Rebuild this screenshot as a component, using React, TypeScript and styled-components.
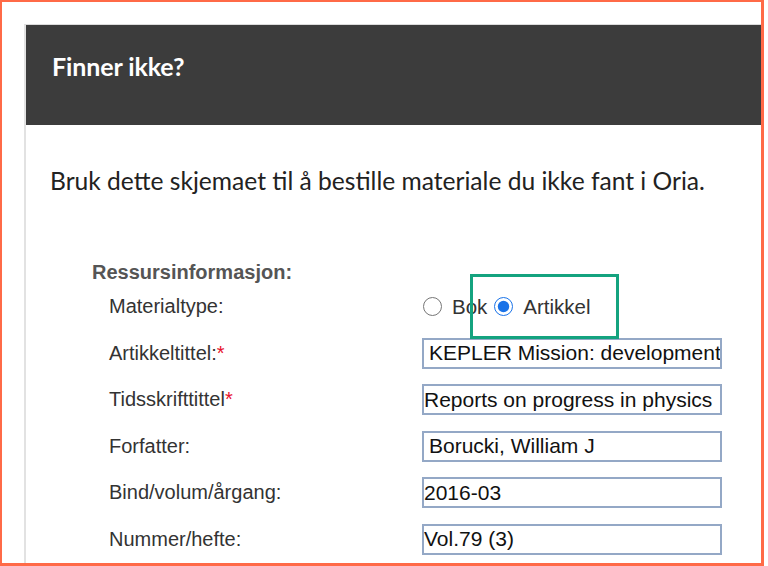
import * as React from "react";
import styled, { createGlobalStyle } from "styled-components";

const GlobalStyle = createGlobalStyle`
  html, body {
    margin: 0;
    padding: 0;
    background: #ffffff;
  }
`;

const fonts = {
  HUMANIST: `"Lato", "Open Sans", sans-serif`,
  ARIAL: `"Liberation Sans", Arial, sans-serif`,
};

const Frame = styled.div`
  position: relative;
  width: 764px;
  height: 566px;
  box-sizing: border-box;
  border: 2px solid #ff6a47;
  border-right-width: 3px;
  border-bottom-width: 3px;
  padding: 22px 0 0 22px;
  overflow: hidden;
  background: #ffffff;
`;

const Card = styled.div`
  width: 900px;
  border-top: 1px solid #dcdcdc;
  border-left: 2px solid #e2e2e2;
  background: #ffffff;
  min-height: 600px;
`;

const Header = styled.div`
  height: 100px;
  box-sizing: border-box;
  background: #3c3c3c;
  padding: 26px 0 0 26px;
`;

const Title = styled.h2`
  margin: 0;
  color: #ffffff;
  font-family: ${fonts.HUMANIST};
  font-weight: 700;
  font-size: 25px;
  line-height: 30px;
  letter-spacing: -0.1px;
`;

const Body = styled.div`
  padding: 41px 0 0 24px;
`;

const Intro = styled.p`
  margin: 0;
  color: #222222;
  font-family: ${fonts.HUMANIST};
  font-size: 24.6px;
  line-height: 30px;
`;

const Fieldset = styled.div`
  margin: 65px 0 0 42px;
  font-family: ${fonts.ARIAL};
`;

const Legend = styled.div`
  font-size: 20px;
  font-weight: 700;
  color: #555555;
  line-height: 22px;
`;

const Rows = styled.div`
  display: grid;
  grid-template-columns: 313px 300px;
  row-gap: 15.5px;
  margin: 8px 0 0 17px;
`;

const Label = styled.label`
  display: flex;
  align-items: center;
  height: 31px;
  font-size: 20px;
  color: #333333;
`;

const Required = styled.span`
  color: #e8112d;
`;

const RadioGroup = styled.div`
  display: flex;
  align-items: center;
  height: 31px;
  font-size: 20.5px;
  color: #333333;
`;

const Radio = styled.input.attrs({ type: "radio" })`
  width: 19px;
  height: 19px;
  margin: 0 10px 0 1px;
  accent-color: #1a73e8;
`;

const RadioText = styled.span<{ $gap: number }>`
  margin-right: ${p => p.$gap}px;
`;

const Field = styled.input<{ $indent?: boolean }>`
  box-sizing: border-box;
  width: 300px;
  height: 31px;
  margin: 0;
  border: 2px solid #94a8c6;
  padding: 0 0 0 ${p => (p.$indent ? 5 : 0)}px;
  font-family: ${fonts.ARIAL};
  font-size: 21px;
  color: #111111;
  background: #ffffff;
  outline: none;
`;

const Highlight = styled.div`
  position: absolute;
  left: 468px;
  top: 272px;
  width: 149px;
  height: 65px;
  box-sizing: border-box;
  border: 3px solid #14a37f;
  pointer-events: none;
`;

interface FieldRow {
  label: string;
  required?: boolean;
  value: string;
  indent?: boolean;
}

const rows: FieldRow[] = [
  { label: "Artikkeltittel:", required: true, value: "KEPLER Mission: development", indent: true },
  { label: "Tidsskrifttittel", required: true, value: "Reports on progress in physics" },
  { label: "Forfatter:", value: "Borucki, William J", indent: true },
  { label: "Bind/volum/årgang:", value: "2016-03" },
  { label: "Nummer/hefte:", value: "Vol.79 (3)" },
];

export default function App() {
  const [type, setType] = React.useState("artikkel");
  return (
    <>
      <GlobalStyle />
      <Frame>
        <Card>
          <Header>
            <Title>Finner ikke?</Title>
          </Header>
          <Body>
            <Intro>Bruk dette skjemaet til å bestille materiale du ikke fant i Oria.</Intro>
            <Fieldset>
              <Legend>Ressursinformasjon:</Legend>
              <Rows>
                <Label>Materialtype:</Label>
                <RadioGroup>
                  <Radio name="type" checked={type === "bok"} onChange={() => setType("bok")} />
                  <RadioText $gap={6}>Bok</RadioText>
                  <Radio name="type" checked={type === "artikkel"} onChange={() => setType("artikkel")} />
                  <RadioText $gap={0}>Artikkel</RadioText>
                </RadioGroup>
                {rows.map(r => (
                  <React.Fragment key={r.label}>
                    <Label>
                      {r.label}
                      {r.required ? <Required>*</Required> : null}
                    </Label>
                    <Field $indent={r.indent} defaultValue={r.value} />
                  </React.Fragment>
                ))}
              </Rows>
            </Fieldset>
          </Body>
        </Card>
        <Highlight />
      </Frame>
    </>
  );
}
